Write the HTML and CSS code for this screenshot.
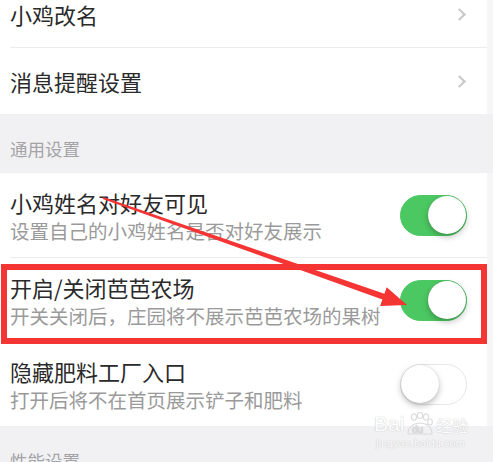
FILE: index.html
```html
<!DOCTYPE html>
<html lang="zh-CN">
<head>
    <meta charset="UTF-8">
    <meta name="viewport" content="width=device-width, initial-scale=1.0">
    <title>设置</title>
    <link rel="stylesheet" href="styles.css">
</head>
<body>

<div class="settings">
    <div class="group first">
        <div class="row">
            <div class="row-inner">
                <div class="title">小鸡改名</div>
                <span class="chevron"></span>
            </div>
        </div>
        <div class="row">
            <div class="row-inner last">
                <div class="title">消息提醒设置</div>
                <span class="chevron"></span>
            </div>
        </div>
    </div>

    <div class="section-head">通用设置</div>

    <div class="group">
        <div class="row">
            <div class="row-inner tall">
                <div class="text">
                    <div class="title">小鸡姓名对好友可见</div>
                    <div class="desc">设置自己的小鸡姓名是否对好友展示</div>
                </div>
                <span class="switch on"><span class="knob"></span></span>
            </div>
        </div>
        <div class="row">
            <div class="row-inner tall">
                <div class="text">
                    <div class="title">开启/关闭芭芭农场</div>
                    <div class="desc">开关关闭后，庄园将不展示芭芭农场的果树</div>
                </div>
                <span class="switch on"><span class="knob"></span></span>
            </div>
        </div>
        <div class="row">
            <div class="row-inner tall last short">
                <div class="text">
                    <div class="title">隐藏肥料工厂入口</div>
                    <div class="desc">打开后将不在首页展示铲子和肥料</div>
                </div>
                <span class="switch"><span class="knob"></span></span>
            </div>
        </div>
    </div>

    <div class="section-head">性能设置</div>
</div>

<!-- annotation overlay -->
<div class="mark-box"></div>
<svg class="mark-arrow" width="493" height="462" viewBox="0 0 493 462">
    <polygon fill="#f53434" points="103.3,197.1 384.4,293.8 386.7,287.2 407,305 380.1,306 382.4,299.4 102.7,198.9"/>
</svg>

<div class="watermark">
    <div class="wm-logo">
        <span>Bai</span>
        <svg width="30" height="24" viewBox="0 0 30 24">
            <g fill="none" stroke="#d8d8d8" stroke-width="1.2">
                <ellipse cx="9" cy="5" rx="2.6" ry="3.2"/>
                <ellipse cx="15" cy="3.5" rx="2.6" ry="3.2"/>
                <ellipse cx="21" cy="5" rx="2.6" ry="3.2"/>
                <ellipse cx="25" cy="10" rx="2.4" ry="3"/>
                <path d="M3 22 Q3 12 15 11 Q27 12 27 22 Z"/>
            </g>
            <text x="7" y="21" font-size="10" fill="#d8d8d8" font-family="Liberation Sans, sans-serif">du</text>
        </svg>
        <span>经验</span>
    </div>
    <div class="wm-url">jingyan.baidu.com</div>
</div>

</body>
</html>
```

FILE: styles.css
```css
* {
    box-sizing: border-box;
    margin: 0;
    padding: 0;
}

body {
    width: 493px;
    height: 462px;
    overflow: hidden;
    background: #f6f6f8;
    font-family: "Noto Sans CJK SC", "Noto Sans", sans-serif;
    color: #2a2a2a;
}

.settings {
    width: 100%;
}

.group.first {
    margin-top: -19px;
}

.row {
    background: #fff;
    padding-left: 10px;
    margin-right: 6px;
}

.row-inner {
    display: flex;
    align-items: center;
    justify-content: space-between;
    height: 67px;
    padding-right: 20px;
    border-bottom: 1px solid #ececee;
}

.row-inner.tall {
    height: 85px;
}

.row-inner.last {
    border-bottom: none;
    height: 66px;
}

.row-inner.tall.last {
    height: 83px;
}

.title {
    font-size: 22px;
    line-height: 28px;
    color: #2a2a2a;
}

.desc {
    font-size: 19.5px;
    line-height: 24px;
    margin-top: 3px;
    color: #9a9a9a;
}

.chevron {
    width: 9px;
    height: 9px;
    border-top: 2px solid #c6c6c6;
    border-right: 2px solid #c6c6c6;
    transform: rotate(45deg);
    margin-right: 3px;
}

.section-head {
    height: 59px;
    display: flex;
    align-items: flex-end;
    padding: 0 0 14px 10px;
    background: #f1f1f4;
    font-size: 17.5px;
    line-height: 21px;
    color: #a4a4a6;
}

.switch {
    position: relative;
    width: 67px;
    height: 41px;
    border-radius: 21px;
    background: #fff;
    border: 1.5px solid #e6e6e6;
    flex-shrink: 0;
}

.switch.on {
    background: #4cc862;
    border-color: #4cc862;
}

.knob {
    position: absolute;
    top: 0;
    left: 0;
    width: 38px;
    height: 38px;
    border-radius: 50%;
    background: #fff;
    box-shadow: 0 3px 6px rgba(0, 0, 0, 0.25), 0 0 1px rgba(0, 0, 0, 0.2);
}

.switch.on .knob {
    left: auto;
    right: 0;
}

/* annotation overlay */
.mark-box {
    position: absolute;
    left: 1px;
    top: 264px;
    width: 486px;
    height: 80px;
    border: 6px solid #f53434;
}

.mark-arrow {
    position: absolute;
    left: 0;
    top: 0;
}

.watermark {
    position: absolute;
    left: 374px;
    top: 412px;
    width: 96px;
    color: #fff;
    font-family: "Liberation Sans", sans-serif;
    text-shadow: 0 0 1px #c4c4c4, 0 0 1px #c4c4c4;
    opacity: 0.85;
}

.wm-logo {
    display: flex;
    align-items: flex-end;
    gap: 1px;
    font-size: 21px;
    line-height: 24px;
}

.wm-logo span:last-child {
    font-family: "Noto Sans CJK SC", sans-serif;
    font-size: 16px;
    line-height: 22px;
}

.wm-url {
    font-size: 11px;
    line-height: 14px;
    margin-left: 2px;
}
```
